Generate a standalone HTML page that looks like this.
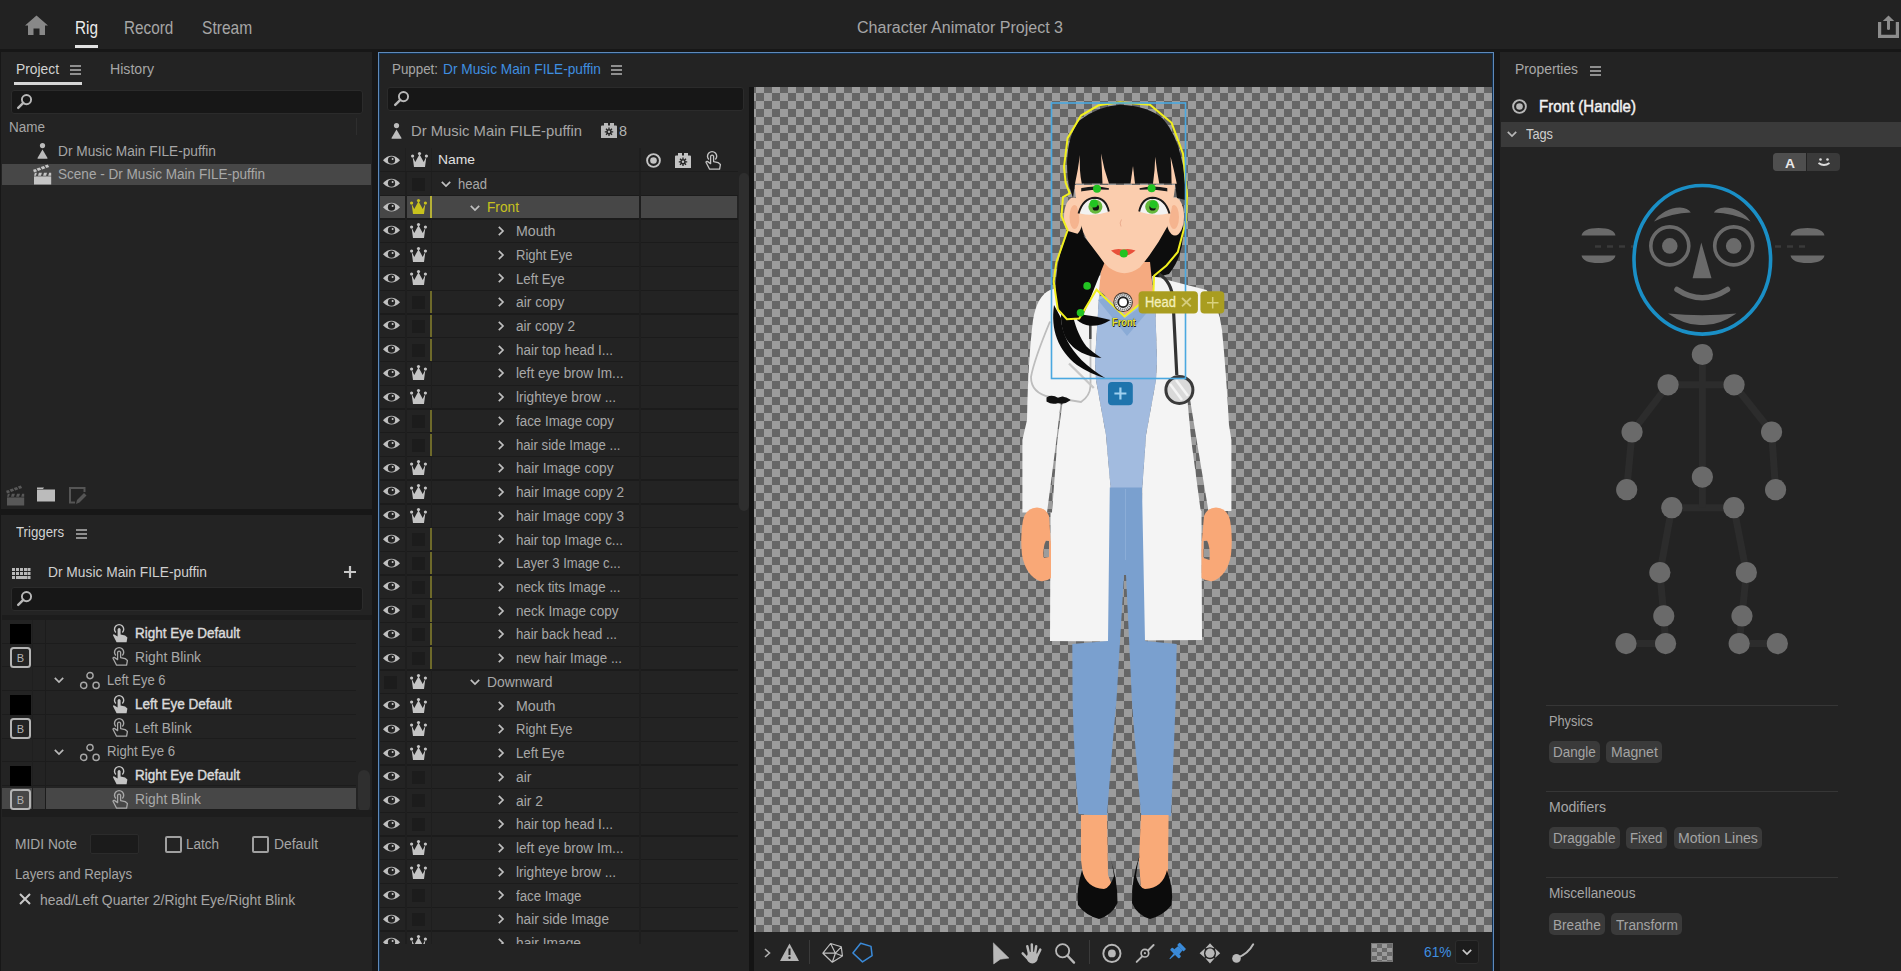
<!DOCTYPE html>
<html><head><meta charset="utf-8"><title>Character Animator</title>
<style>*{box-sizing:border-box;margin:0;padding:0}
html,body{width:1901px;height:971px;overflow:hidden;background:#171717;font-family:"Liberation Sans",sans-serif;color:#a8a8a8;position:relative}
.a{position:absolute}
.t{position:absolute;white-space:nowrap;line-height:1}
svg{position:absolute;overflow:visible}
</style></head><body>
<svg width="0" height="0" style="position:absolute"><defs>
<symbol id="search" overflow="visible"><circle cx="9.5" cy="5.6" r="4.6" fill="none" stroke-width="1.9"/><path d="M6.3 8.8 L1.2 13.9" stroke-width="2.4" stroke-linecap="round" fill="none"/></symbol>
<symbol id="ham" overflow="visible"><path d="M0 1h11M0 5h11M0 9h11" stroke-width="1.4" fill="none"/></symbol>
<symbol id="person" overflow="visible"><circle cx="5.5" cy="2.6" r="2.6" stroke="none"/><path d="M5.5 6.5 L10.5 15 Q10.8 15.8 10 15.8 H1 Q0.2 15.8 0.5 15 Z" stroke="none"/></symbol>
<symbol id="clap" overflow="visible"><rect x="0" y="11.4" width="17.2" height="8.1" stroke="none"/><path d="M0 10.8 L0.9 7.8 H2.9 L2 10.8Z M4 10.8 L4.9 7.8 H7.9 L7 10.8Z M9.1 10.8 L10 7.8 H13 L12.1 10.8Z M14.2 10.8 L15.1 7.8 H17.2 V10.8Z" stroke="none"/><g transform="rotate(-20 0 7.4)"><path d="M0 7.4 V4.7 H2.6 L3.3 7.4Z M4.4 7.4 L3.7 4.7 H7 L7.7 7.4Z M8.8 7.4 L8.1 4.7 H11.4 L12.1 7.4Z M13.2 7.4 L12.5 4.7 H15.6 L16.1 7.4Z" stroke="none"/></g></symbol>
<symbol id="eye" overflow="visible"><path d="M0 5.2 Q8.5 -3.5 17 5.2 Q8.5 13.9 0 5.2 Z" stroke="none"/><circle cx="8.5" cy="5.2" r="3.6" fill="#232323" stroke="none"/><circle cx="9.6" cy="4.1" r="1" fill="#c8c8c8" stroke="none"/></symbol>
<symbol id="crown" overflow="visible"><path d="M1.6 4.6 L4.3 9.9 L8.5 2.2 L12.7 9.9 L15.4 4.6 L14 15 L3 15 Z" stroke="none"/><circle cx="1.6" cy="4" r="1.6" stroke="none"/><circle cx="8.5" cy="1.6" r="1.6" stroke="none"/><circle cx="15.4" cy="4" r="1.6" stroke="none"/></symbol>
<symbol id="chevd" overflow="visible"><path d="M0.8 0.8 L5 5 L9.2 0.8" fill="none" stroke-width="1.7"/></symbol>
<symbol id="chevr" overflow="visible"><path d="M0.8 0.8 L5 5 L0.8 9.2" fill="none" stroke-width="1.7"/></symbol>
<symbol id="handf" overflow="visible"><path d="M3.85 8.45 A4.6 4.6 0 1 1 10.35 8.45" fill="none" stroke-width="1.4"/><path d="M5.6 5.2 Q7.1 3 8.6 5.2 V10.6 L13.1 11.6 L15.4 13.6 L14.6 18.2 H4.6 L1 11.2 Q1.1 10.1 2.3 10.4 L5.6 12.6 Z" stroke="none"/></symbol>
<symbol id="hando" overflow="visible"><path d="M3.85 8.45 A4.6 4.6 0 1 1 10.35 8.45" fill="none" stroke-width="1.4"/><path d="M5.6 5.2 Q7.1 3 8.6 5.2 V10.6 L13.1 11.6 L15.4 13.6 L14.6 18.2 H4.6 L1 11.2 Q1.1 10.1 2.3 10.4 L5.6 12.6 Z" fill="none" stroke-width="1.3" stroke-linejoin="round"/></symbol>
<symbol id="bbox" overflow="visible"><rect x="1" y="1" width="19" height="19" rx="2.5" fill="none" stroke-width="2"/><text x="10.5" y="15" font-family="Liberation Sans" font-size="11" text-anchor="middle" stroke="none">B</text></symbol>
<symbol id="group" overflow="visible"><circle cx="10" cy="3.6" r="3.1" fill="none" stroke-width="1.4"/><circle cx="3.7" cy="13.4" r="3.1" fill="none" stroke-width="1.4"/><circle cx="16.1" cy="13.4" r="3.1" fill="none" stroke-width="1.4"/></symbol>
<symbol id="kbd" overflow="visible"><path d="M0 0h3v3h-3zM4 0h3v3h-3zM8 0h3v3h-3zM12 0h3v3h-3zM15.5 0h3v3h-3zM0 4h3v3h-3zM4 4h3v3h-3zM8 4h3v3h-3zM12 4h3v3h-3zM15.5 4h3v3h-3zM0 8h3v3h-3zM4 8h11v3h-11zM15.5 8h3v3h-3z" stroke="none"/></symbol>
<symbol id="plus" overflow="visible"><path d="M6 0V12M0 6H12" stroke-width="2.2" fill="none"/></symbol>
<symbol id="xx" overflow="visible"><path d="M1 1L11 11M11 1L1 11" stroke-width="2" fill="none"/></symbol>
<symbol id="handle" overflow="visible"><circle cx="7.5" cy="7.5" r="6.4" fill="none" stroke-width="1.9"/><circle cx="7.5" cy="7.5" r="3.3" stroke="none"/></symbol>
<symbol id="gearblk" overflow="visible"><path d="M0 3.5 Q0 2.5 1 2.5 H3 V0 H7 V2.5 H9 V0 H13 V2.5 H15 Q16 2.5 16 3.5 V15 H0 Z" stroke="none"/><circle cx="8" cy="8.8" r="2.6" fill="#232323" stroke="none"/><path d="M8 4.5V13M3.8 8.8H12.2M5 5.8L11 11.8M11 5.8L5 11.8" stroke="#232323" stroke-width="1.3"/><circle cx="8" cy="8.8" r="1.2" stroke="none"/></symbol>
</defs></svg>
<div class="a" style="left:0px;top:0px;width:1901px;height:49px;background:#222222;"></div><svg class="a" style="left:25px;top:15px" width="23" height="20" viewBox="0 0 23 20"><path d="M11.5 0.5 L23 10.5 L20 10.5 L20 20 L14.5 20 L14.5 13.5 L8.5 13.5 L8.5 20 L3 20 L3 10.5 L0 10.5 Z" fill="#888"/></svg><div class="t" style="left:75.4px;top:19.14px;font-size:18.31px;color:#ececec;transform:scaleX(0.837);transform-origin:0 0;">Rig</div><div class="a" style="left:75px;top:45px;width:23px;height:3px;background:#e2e2e2;"></div><div class="t" style="left:124.2px;top:19.14px;font-size:18.31px;color:#a6a6a6;transform:scaleX(0.836);transform-origin:0 0;">Record</div><div class="t" style="left:202.2px;top:19.14px;font-size:18.31px;color:#a6a6a6;transform:scaleX(0.851);transform-origin:0 0;">Stream</div><div class="t" style="left:857px;top:19.04px;font-size:16.42px;color:#a6a6a6;transform:scaleX(0.978);transform-origin:0 0;">Character Animator Project 3</div><svg class="a" style="left:1878px;top:15px" width="21" height="24" viewBox="0 0 21 24"><path d="M1.6 7 V21.4 H19.4 V7" fill="none" stroke="#8c8c8c" stroke-width="3.2"/><path d="M10.5 5 V13.5" stroke="#8c8c8c" stroke-width="3" stroke-linecap="round"/><path d="M4.8 6 L10.5 0.5 L16.2 6 Z" fill="#8c8c8c"/></svg><div class="a" style="left:1px;top:52px;width:371px;height:457px;background:#232323;"></div><div class="t" style="left:16px;top:61.05px;font-size:15.12px;color:#d2d2d2;transform:scaleX(0.914);transform-origin:0 0;">Project</div><svg class="a" style="left:70px;top:64.5px;" width="11" height="11" viewBox="0 0 11 11" fill="#b4b4b4" stroke="#b4b4b4"><use href="#ham"/></svg><div class="a" style="left:14px;top:82px;width:68px;height:3px;background:#d6d6d6;"></div><div class="t" style="left:110px;top:61.05px;font-size:15.12px;color:#a6a6a6;transform:scaleX(0.936);transform-origin:0 0;">History</div><div class="a" style="left:11px;top:90px;width:352px;height:24px;background:#171717;border:1px solid #2b2b2b;border-radius:3px"></div><svg class="a" style="left:17px;top:94px;" width="15" height="15" viewBox="0 0 15 15" fill="#b8b8b8" stroke="#b8b8b8"><use href="#search"/></svg><div class="t" style="left:9px;top:120.96px;font-size:13.81px;color:#a6a6a6;transform:scaleX(0.978);transform-origin:0 0;">Name</div><div class="a" style="left:356px;top:118px;width:1px;height:17px;background:#2e2e2e;"></div><svg class="a" style="left:37px;top:143px;" width="11" height="16" viewBox="0 0 11 16" fill="#bcbcbc" stroke="#bcbcbc"><use href="#person"/></svg><div class="t" style="left:58px;top:144.25px;font-size:14.53px;color:#a6a6a6;transform:scaleX(0.943);transform-origin:0 0;">Dr Music Main FILE-puffin</div><div class="a" style="left:2px;top:164px;width:369px;height:21px;background:#474747;"></div><svg class="a" style="left:34px;top:164.5px;" width="17" height="19" viewBox="0 0 17 19" fill="#c4c4c4" stroke="#c4c4c4"><use href="#clap"/></svg><div class="t" style="left:58px;top:167.15px;font-size:14.53px;color:#a8a8a8;transform:scaleX(0.934);transform-origin:0 0;">Scene - Dr Music Main FILE-puffin</div><svg class="a" style="left:7px;top:485.5px;" width="17" height="19" viewBox="0 0 17 19" fill="#585858" stroke="#585858"><use href="#clap"/></svg><svg class="a" style="left:37px;top:487px" width="18" height="15" viewBox="0 0 18 15"><path d="M0 2 H6 L7 0.5 H0z" fill="#bbb"/><rect x="0" y="2.5" width="18" height="12" fill="#bbb"/></svg><svg class="a" style="left:69px;top:487px" width="18" height="18" viewBox="0 0 18 18"><path d="M15.5 5 V1 H1 V15.5 H6" fill="none" stroke="#555" stroke-width="2"/><path d="M7 17 L8 13 L15 6 L17.5 8.5 L10.5 15.5 Z" fill="#555"/></svg><div class="a" style="left:1px;top:515px;width:371px;height:456px;background:#232323;"></div><div class="t" style="left:16px;top:524.15px;font-size:15.12px;color:#d2d2d2;transform:scaleX(0.875);transform-origin:0 0;">Triggers</div><svg class="a" style="left:76px;top:528.5px;" width="11" height="11" viewBox="0 0 11 11" fill="#b4b4b4" stroke="#b4b4b4"><use href="#ham"/></svg><svg class="a" style="left:12px;top:568px;" width="19" height="11" viewBox="0 0 19 11" fill="#b8b8b8" stroke="#b8b8b8"><use href="#kbd"/></svg><div class="t" style="left:48px;top:565.35px;font-size:14.53px;color:#d0d0d0;transform:scaleX(0.949);transform-origin:0 0;">Dr Music Main FILE-puffin</div><svg class="a" style="left:344px;top:566px;" width="12" height="12" viewBox="0 0 12 12" fill="#c8c8c8" stroke="#c8c8c8"><use href="#plus"/></svg><div class="a" style="left:11px;top:587px;width:352px;height:24px;background:#171717;border:1px solid #2b2b2b;border-radius:3px"></div><svg class="a" style="left:17px;top:591px;" width="15" height="15" viewBox="0 0 15 15" fill="#b8b8b8" stroke="#b8b8b8"><use href="#search"/></svg><div class="a" style="left:2px;top:615px;width:370px;height:5px;background:#1c1c1c;"></div><div class="a" style="left:2px;top:642.72px;width:354px;height:1px;background:#1c1c1c;"></div><div class="a" style="left:10px;top:623.5px;width:21px;height:20px;background:#000;"></div><svg class="a" style="left:111.5px;top:623.5px;" width="16" height="19" viewBox="0 0 16 19" fill="#c4c4c4" stroke="#c4c4c4"><use href="#handf"/></svg><div class="t" style="left:135px;top:626.02px;font-size:14.68px;color:#dadada;transform:scaleX(0.920);transform-origin:0 0;-webkit-text-stroke:0.45px #dadada;">Right Eye Default</div><div class="a" style="left:2px;top:666.44px;width:354px;height:1px;background:#1c1c1c;"></div><svg class="a" style="left:10px;top:646.72px;" width="21" height="21" viewBox="0 0 21 21" fill="#b4b4b4" stroke="#b4b4b4"><use href="#bbox"/></svg><svg class="a" style="left:111.5px;top:647.22px;" width="16" height="19" viewBox="0 0 16 19" fill="#a8a8a8" stroke="#a8a8a8"><use href="#hando"/></svg><div class="t" style="left:135px;top:649.74px;font-size:14.68px;color:#a8a8a8;transform:scaleX(0.941);transform-origin:0 0;">Right Blink</div><div class="a" style="left:2px;top:690.16px;width:354px;height:1px;background:#1c1c1c;"></div><svg class="a" style="left:54px;top:677.44px;" width="10" height="6" viewBox="0 0 10 6" fill="#b8b8b8" stroke="#b8b8b8"><use href="#chevd"/></svg><svg class="a" style="left:80px;top:672.44px;" width="20" height="18" viewBox="0 0 20 18" fill="#a8a8a8" stroke="#a8a8a8"><use href="#group"/></svg><div class="t" style="left:106.5px;top:672.86px;font-size:14.68px;color:#a8a8a8;transform:scaleX(0.885);transform-origin:0 0;">Left Eye 6</div><div class="a" style="left:2px;top:713.88px;width:354px;height:1px;background:#1c1c1c;"></div><div class="a" style="left:10px;top:694.66px;width:21px;height:20px;background:#000;"></div><svg class="a" style="left:111.5px;top:694.66px;" width="16" height="19" viewBox="0 0 16 19" fill="#c4c4c4" stroke="#c4c4c4"><use href="#handf"/></svg><div class="t" style="left:135px;top:697.18px;font-size:14.68px;color:#dadada;transform:scaleX(0.924);transform-origin:0 0;-webkit-text-stroke:0.45px #dadada;">Left Eye Default</div><div class="a" style="left:2px;top:737.6px;width:354px;height:1px;background:#1c1c1c;"></div><svg class="a" style="left:10px;top:717.88px;" width="21" height="21" viewBox="0 0 21 21" fill="#b4b4b4" stroke="#b4b4b4"><use href="#bbox"/></svg><svg class="a" style="left:111.5px;top:718.38px;" width="16" height="19" viewBox="0 0 16 19" fill="#a8a8a8" stroke="#a8a8a8"><use href="#hando"/></svg><div class="t" style="left:135px;top:720.90px;font-size:14.68px;color:#a8a8a8;transform:scaleX(0.938);transform-origin:0 0;">Left Blink</div><div class="a" style="left:2px;top:761.32px;width:354px;height:1px;background:#1c1c1c;"></div><svg class="a" style="left:54px;top:748.6px;" width="10" height="6" viewBox="0 0 10 6" fill="#b8b8b8" stroke="#b8b8b8"><use href="#chevd"/></svg><svg class="a" style="left:80px;top:743.6px;" width="20" height="18" viewBox="0 0 20 18" fill="#a8a8a8" stroke="#a8a8a8"><use href="#group"/></svg><div class="t" style="left:106.5px;top:744.02px;font-size:14.68px;color:#a8a8a8;transform:scaleX(0.896);transform-origin:0 0;">Right Eye 6</div><div class="a" style="left:2px;top:785.04px;width:354px;height:1px;background:#1c1c1c;"></div><div class="a" style="left:10px;top:765.82px;width:21px;height:20px;background:#000;"></div><svg class="a" style="left:111.5px;top:765.82px;" width="16" height="19" viewBox="0 0 16 19" fill="#c4c4c4" stroke="#c4c4c4"><use href="#handf"/></svg><div class="t" style="left:135px;top:768.34px;font-size:14.68px;color:#dadada;transform:scaleX(0.920);transform-origin:0 0;-webkit-text-stroke:0.45px #dadada;">Right Eye Default</div><div class="a" style="left:2px;top:787.54px;width:354px;height:22px;background:#474747;"></div><div class="a" style="left:32px;top:787.54px;width:13px;height:22px;background:#3d3d3d;"></div><div class="a" style="left:2px;top:808.76px;width:354px;height:1px;background:#1c1c1c;"></div><svg class="a" style="left:10px;top:789.04px;" width="21" height="21" viewBox="0 0 21 21" fill="#b4b4b4" stroke="#b4b4b4"><use href="#bbox"/></svg><svg class="a" style="left:111.5px;top:789.54px;" width="16" height="19" viewBox="0 0 16 19" fill="#a8a8a8" stroke="#a8a8a8"><use href="#hando"/></svg><div class="t" style="left:135px;top:792.06px;font-size:14.68px;color:#a8a8a8;transform:scaleX(0.941);transform-origin:0 0;">Right Blink</div><div class="a" style="left:32px;top:620px;width:1px;height:190px;background:#1f1f1f;"></div><div class="a" style="left:45px;top:620px;width:1px;height:190px;background:#1c1c1c;"></div><div class="a" style="left:358px;top:770px;width:12px;height:42px;background:#2f2f2f;border-radius:6px"></div><div class="a" style="left:2px;top:810px;width:370px;height:7px;background:#1d1d1d;"></div><div class="t" style="left:15px;top:837.35px;font-size:14.53px;color:#a6a6a6;transform:scaleX(0.949);transform-origin:0 0;">MIDI Note</div><div class="a" style="left:90px;top:834px;width:49px;height:20px;background:#1b1b1b;border:1px solid #2b2b2b;border-radius:2px"></div><div class="a" style="left:165px;top:836px;width:17px;height:17px;border:2px solid #a0a0a0;border-radius:2px"></div><div class="t" style="left:186px;top:837.35px;font-size:14.53px;color:#a6a6a6;transform:scaleX(0.929);transform-origin:0 0;">Latch</div><div class="a" style="left:252px;top:836px;width:17px;height:17px;border:2px solid #a0a0a0;border-radius:2px"></div><div class="t" style="left:274px;top:837.35px;font-size:14.53px;color:#a6a6a6;transform:scaleX(0.957);transform-origin:0 0;">Default</div><div class="t" style="left:15px;top:866.95px;font-size:14.53px;color:#a6a6a6;transform:scaleX(0.912);transform-origin:0 0;">Layers and Replays</div><svg class="a" style="left:19px;top:893px;" width="12" height="12" viewBox="0 0 12 12" fill="#c8c8c8" stroke="#c8c8c8"><use href="#xx"/></svg><div class="t" style="left:40px;top:892.85px;font-size:14.53px;color:#a6a6a6;transform:scaleX(0.958);transform-origin:0 0;">head/Left Quarter 2/Right Eye/Right Blink</div><div class="a" style="left:378px;top:52px;width:1116px;height:919px;background:#232323;"></div><div class="a" style="left:378px;top:52px;width:1116px;height:1px;background:#5f89b9;"></div><div class="a" style="left:378px;top:53px;width:1116px;height:1px;background:#12304f;"></div><div class="a" style="left:378px;top:52px;width:1px;height:919px;background:#5f89b9;"></div><div class="a" style="left:379px;top:53px;width:1px;height:918px;background:#12304f;"></div><div class="a" style="left:1493px;top:52px;width:1px;height:919px;background:#5f89b9;"></div><div class="a" style="left:1492px;top:53px;width:1px;height:918px;background:#12304f;"></div><div class="t" style="left:392px;top:61.05px;font-size:15.12px;color:#a6a6a6;transform:scaleX(0.883);transform-origin:0 0;">Puppet:</div><div class="t" style="left:443px;top:61.05px;font-size:15.12px;color:#3f8fe0;transform:scaleX(0.906);transform-origin:0 0;">Dr Music Main FILE-puffin</div><svg class="a" style="left:611px;top:64.5px;" width="11" height="11" viewBox="0 0 11 11" fill="#b4b4b4" stroke="#b4b4b4"><use href="#ham"/></svg><div class="a" style="left:387px;top:87px;width:357px;height:24px;background:#171717;border:1px solid #2b2b2b;border-radius:3px"></div><svg class="a" style="left:393.5px;top:91px;" width="15" height="15" viewBox="0 0 15 15" fill="#b8b8b8" stroke="#b8b8b8"><use href="#search"/></svg><svg class="a" style="left:391px;top:123px;" width="11" height="16" viewBox="0 0 11 16" fill="#bcbcbc" stroke="#bcbcbc"><use href="#person"/></svg><div class="t" style="left:411px;top:123.68px;font-size:14.97px;color:#a6a6a6;transform:scaleX(0.990);transform-origin:0 0;">Dr Music Main FILE-puffin</div><svg class="a" style="left:601px;top:123px;" width="16" height="15" viewBox="0 0 16 15" fill="#b8b8b8" stroke="#b8b8b8"><use href="#gearblk"/></svg><div class="t" style="left:619px;top:123.68px;font-size:14.97px;color:#b4b4b4;transform:scaleX(0.961);transform-origin:0 0;">8</div><svg class="a" style="left:383px;top:155px;" width="17" height="11" viewBox="0 0 17 11" fill="#c4c4c4" stroke="#c4c4c4"><use href="#eye"/></svg><svg class="a" style="left:411px;top:152px;" width="17" height="16" viewBox="0 0 17 16" fill="#c4c4c4" stroke="#c4c4c4"><use href="#crown"/></svg><div class="t" style="left:438px;top:153.24px;font-size:13.37px;color:#e0e0e0;transform:scaleX(1.038);transform-origin:0 0;">Name</div><svg class="a" style="left:646px;top:153px;" width="15" height="15" viewBox="0 0 15 15" fill="#c4c4c4" stroke="#c4c4c4"><use href="#handle"/></svg><svg class="a" style="left:675px;top:153px;" width="16" height="15" viewBox="0 0 16 15" fill="#c4c4c4" stroke="#c4c4c4"><use href="#gearblk"/></svg><svg class="a" style="left:705px;top:151px;" width="16" height="19" viewBox="0 0 16 19" fill="#c4c4c4" stroke="#c4c4c4"><use href="#hando"/></svg><div class="a" style="left:380px;top:171px;width:358px;height:1px;background:#1c1c1c;"></div><div class="a" style="left:405px;top:148px;width:1.2px;height:23px;background:#1f1f1f;"></div><div class="a" style="left:430.5px;top:148px;width:1.2px;height:23px;background:#1f1f1f;"></div><div class="a" style="left:639px;top:148px;width:1.5px;height:23px;background:#1e1e1e;"></div><div class="a" style="left:380px;top:171px;width:370px;height:773px;overflow:hidden"><div class="a" style="left:0px;top:23.72px;width:358px;height:1.3px;background:#1b1b1b;"></div><div class="a" style="left:25px;top:0.5px;width:1.5px;height:24px;background:#1e1e1e;"></div><div class="a" style="left:50.5px;top:0.5px;width:1.5px;height:24px;background:#1e1e1e;"></div><div class="a" style="left:259px;top:0.5px;width:1.5px;height:24px;background:#1e1e1e;"></div><svg class="a" style="left:3px;top:7.0px;" width="17" height="11" viewBox="0 0 17 11" fill="#c0c0c0" stroke="#c0c0c0"><use href="#eye"/></svg><div class="a" style="left:32px;top:6.5px;width:13px;height:13px;background:#1c1c1c;"></div><svg class="a" style="left:61px;top:10.0px;" width="10" height="6" viewBox="0 0 10 6" fill="#c0c0c0" stroke="#c0c0c0"><use href="#chevd"/></svg><div class="t" style="left:78px;top:5.62px;font-size:14.68px;color:#a8a8a8;transform:scaleX(0.888);transform-origin:0 0;">head</div><div class="a" style="left:0px;top:25.23px;width:25px;height:22px;background:#474747;"></div><div class="a" style="left:27px;top:25.23px;width:23px;height:22px;background:#474747;"></div><div class="a" style="left:52px;top:25.23px;width:207px;height:22px;background:#474747;"></div><div class="a" style="left:261px;top:25.23px;width:96px;height:22px;background:#474747;"></div><div class="a" style="left:0px;top:47.45px;width:358px;height:1.3px;background:#1b1b1b;"></div><div class="a" style="left:25px;top:24.23px;width:1.5px;height:24px;background:#1e1e1e;"></div><div class="a" style="left:50.5px;top:24.23px;width:1.5px;height:24px;background:#1e1e1e;"></div><div class="a" style="left:259px;top:24.23px;width:1.5px;height:24px;background:#1e1e1e;"></div><svg class="a" style="left:3px;top:30.73px;" width="17" height="11" viewBox="0 0 17 11" fill="#c0c0c0" stroke="#c0c0c0"><use href="#eye"/></svg><svg class="a" style="left:30px;top:28.23px;" width="17" height="16" viewBox="0 0 17 16" fill="#c8c21e" stroke="#c8c21e"><use href="#crown"/></svg><div class="a" style="left:50px;top:25.23px;width:1.6px;height:22px;background:#b5b036;"></div><svg class="a" style="left:90px;top:33.73px;" width="10" height="6" viewBox="0 0 10 6" fill="#c0c0c0" stroke="#c0c0c0"><use href="#chevd"/></svg><div class="t" style="left:107px;top:29.35px;font-size:14.68px;color:#c8c21e;transform:scaleX(0.934);transform-origin:0 0;">Front</div><div class="a" style="left:0px;top:71.18px;width:358px;height:1.3px;background:#1b1b1b;"></div><div class="a" style="left:25px;top:47.96px;width:1.5px;height:24px;background:#1e1e1e;"></div><div class="a" style="left:50.5px;top:47.96px;width:1.5px;height:24px;background:#1e1e1e;"></div><div class="a" style="left:259px;top:47.96px;width:1.5px;height:24px;background:#1e1e1e;"></div><svg class="a" style="left:3px;top:54.46px;" width="17" height="11" viewBox="0 0 17 11" fill="#c0c0c0" stroke="#c0c0c0"><use href="#eye"/></svg><svg class="a" style="left:30px;top:51.96px;" width="17" height="16" viewBox="0 0 17 16" fill="#c4c4c4" stroke="#c4c4c4"><use href="#crown"/></svg><svg class="a" style="left:118px;top:54.96px;" width="6" height="10" viewBox="0 0 6 10" fill="#c0c0c0" stroke="#c0c0c0"><use href="#chevr"/></svg><div class="t" style="left:136px;top:53.08px;font-size:14.68px;color:#a8a8a8;transform:scaleX(0.969);transform-origin:0 0;">Mouth</div><div class="a" style="left:0px;top:94.91px;width:358px;height:1.3px;background:#1b1b1b;"></div><div class="a" style="left:25px;top:71.69px;width:1.5px;height:24px;background:#1e1e1e;"></div><div class="a" style="left:50.5px;top:71.69px;width:1.5px;height:24px;background:#1e1e1e;"></div><div class="a" style="left:259px;top:71.69px;width:1.5px;height:24px;background:#1e1e1e;"></div><svg class="a" style="left:3px;top:78.19px;" width="17" height="11" viewBox="0 0 17 11" fill="#c0c0c0" stroke="#c0c0c0"><use href="#eye"/></svg><svg class="a" style="left:30px;top:75.69px;" width="17" height="16" viewBox="0 0 17 16" fill="#c4c4c4" stroke="#c4c4c4"><use href="#crown"/></svg><svg class="a" style="left:118px;top:78.69px;" width="6" height="10" viewBox="0 0 6 10" fill="#c0c0c0" stroke="#c0c0c0"><use href="#chevr"/></svg><div class="t" style="left:136px;top:76.81px;font-size:14.68px;color:#a8a8a8;transform:scaleX(0.888);transform-origin:0 0;">Right Eye</div><div class="a" style="left:0px;top:118.64px;width:358px;height:1.3px;background:#1b1b1b;"></div><div class="a" style="left:25px;top:95.42px;width:1.5px;height:24px;background:#1e1e1e;"></div><div class="a" style="left:50.5px;top:95.42px;width:1.5px;height:24px;background:#1e1e1e;"></div><div class="a" style="left:259px;top:95.42px;width:1.5px;height:24px;background:#1e1e1e;"></div><svg class="a" style="left:3px;top:101.92px;" width="17" height="11" viewBox="0 0 17 11" fill="#c0c0c0" stroke="#c0c0c0"><use href="#eye"/></svg><svg class="a" style="left:30px;top:99.42px;" width="17" height="16" viewBox="0 0 17 16" fill="#c4c4c4" stroke="#c4c4c4"><use href="#crown"/></svg><svg class="a" style="left:118px;top:102.42px;" width="6" height="10" viewBox="0 0 6 10" fill="#c0c0c0" stroke="#c0c0c0"><use href="#chevr"/></svg><div class="t" style="left:136px;top:100.54px;font-size:14.68px;color:#a8a8a8;transform:scaleX(0.901);transform-origin:0 0;">Left Eye</div><div class="a" style="left:0px;top:142.37px;width:358px;height:1.3px;background:#1b1b1b;"></div><div class="a" style="left:25px;top:119.15px;width:1.5px;height:24px;background:#1e1e1e;"></div><div class="a" style="left:50.5px;top:119.15px;width:1.5px;height:24px;background:#1e1e1e;"></div><div class="a" style="left:259px;top:119.15px;width:1.5px;height:24px;background:#1e1e1e;"></div><svg class="a" style="left:3px;top:125.65px;" width="17" height="11" viewBox="0 0 17 11" fill="#c0c0c0" stroke="#c0c0c0"><use href="#eye"/></svg><div class="a" style="left:32px;top:125.15px;width:13px;height:13px;background:#1c1c1c;"></div><div class="a" style="left:50px;top:120.15px;width:1.5px;height:22px;background:#6e6a2a;"></div><svg class="a" style="left:118px;top:126.15px;" width="6" height="10" viewBox="0 0 6 10" fill="#c0c0c0" stroke="#c0c0c0"><use href="#chevr"/></svg><div class="t" style="left:136px;top:124.27px;font-size:14.68px;color:#a8a8a8;transform:scaleX(0.944);transform-origin:0 0;">air copy</div><div class="a" style="left:0px;top:166.1px;width:358px;height:1.3px;background:#1b1b1b;"></div><div class="a" style="left:25px;top:142.88px;width:1.5px;height:24px;background:#1e1e1e;"></div><div class="a" style="left:50.5px;top:142.88px;width:1.5px;height:24px;background:#1e1e1e;"></div><div class="a" style="left:259px;top:142.88px;width:1.5px;height:24px;background:#1e1e1e;"></div><svg class="a" style="left:3px;top:149.38px;" width="17" height="11" viewBox="0 0 17 11" fill="#c0c0c0" stroke="#c0c0c0"><use href="#eye"/></svg><div class="a" style="left:32px;top:148.88px;width:13px;height:13px;background:#1c1c1c;"></div><div class="a" style="left:50px;top:143.88px;width:1.5px;height:22px;background:#6e6a2a;"></div><svg class="a" style="left:118px;top:149.88px;" width="6" height="10" viewBox="0 0 6 10" fill="#c0c0c0" stroke="#c0c0c0"><use href="#chevr"/></svg><div class="t" style="left:136px;top:148.00px;font-size:14.68px;color:#a8a8a8;transform:scaleX(0.928);transform-origin:0 0;">air copy 2</div><div class="a" style="left:0px;top:189.83px;width:358px;height:1.3px;background:#1b1b1b;"></div><div class="a" style="left:25px;top:166.61px;width:1.5px;height:24px;background:#1e1e1e;"></div><div class="a" style="left:50.5px;top:166.61px;width:1.5px;height:24px;background:#1e1e1e;"></div><div class="a" style="left:259px;top:166.61px;width:1.5px;height:24px;background:#1e1e1e;"></div><svg class="a" style="left:3px;top:173.11px;" width="17" height="11" viewBox="0 0 17 11" fill="#c0c0c0" stroke="#c0c0c0"><use href="#eye"/></svg><div class="a" style="left:32px;top:172.61px;width:13px;height:13px;background:#1c1c1c;"></div><div class="a" style="left:50px;top:167.61px;width:1.5px;height:22px;background:#6e6a2a;"></div><svg class="a" style="left:118px;top:173.61px;" width="6" height="10" viewBox="0 0 6 10" fill="#c0c0c0" stroke="#c0c0c0"><use href="#chevr"/></svg><div class="t" style="left:136px;top:171.73px;font-size:14.68px;color:#a8a8a8;transform:scaleX(0.915);transform-origin:0 0;">hair top head I...</div><div class="a" style="left:0px;top:213.56px;width:358px;height:1.3px;background:#1b1b1b;"></div><div class="a" style="left:25px;top:190.34px;width:1.5px;height:24px;background:#1e1e1e;"></div><div class="a" style="left:50.5px;top:190.34px;width:1.5px;height:24px;background:#1e1e1e;"></div><div class="a" style="left:259px;top:190.34px;width:1.5px;height:24px;background:#1e1e1e;"></div><svg class="a" style="left:3px;top:196.84px;" width="17" height="11" viewBox="0 0 17 11" fill="#c0c0c0" stroke="#c0c0c0"><use href="#eye"/></svg><svg class="a" style="left:30px;top:194.34px;" width="17" height="16" viewBox="0 0 17 16" fill="#c4c4c4" stroke="#c4c4c4"><use href="#crown"/></svg><svg class="a" style="left:118px;top:197.34px;" width="6" height="10" viewBox="0 0 6 10" fill="#c0c0c0" stroke="#c0c0c0"><use href="#chevr"/></svg><div class="t" style="left:136px;top:195.46px;font-size:14.68px;color:#a8a8a8;transform:scaleX(0.928);transform-origin:0 0;">left eye brow Im...</div><div class="a" style="left:0px;top:237.29px;width:358px;height:1.3px;background:#1b1b1b;"></div><div class="a" style="left:25px;top:214.07px;width:1.5px;height:24px;background:#1e1e1e;"></div><div class="a" style="left:50.5px;top:214.07px;width:1.5px;height:24px;background:#1e1e1e;"></div><div class="a" style="left:259px;top:214.07px;width:1.5px;height:24px;background:#1e1e1e;"></div><svg class="a" style="left:3px;top:220.57px;" width="17" height="11" viewBox="0 0 17 11" fill="#c0c0c0" stroke="#c0c0c0"><use href="#eye"/></svg><svg class="a" style="left:30px;top:218.07px;" width="17" height="16" viewBox="0 0 17 16" fill="#c4c4c4" stroke="#c4c4c4"><use href="#crown"/></svg><svg class="a" style="left:118px;top:221.07px;" width="6" height="10" viewBox="0 0 6 10" fill="#c0c0c0" stroke="#c0c0c0"><use href="#chevr"/></svg><div class="t" style="left:136px;top:219.19px;font-size:14.68px;color:#a8a8a8;transform:scaleX(0.929);transform-origin:0 0;">lrighteye brow ...</div><div class="a" style="left:0px;top:261.02px;width:358px;height:1.3px;background:#1b1b1b;"></div><div class="a" style="left:25px;top:237.8px;width:1.5px;height:24px;background:#1e1e1e;"></div><div class="a" style="left:50.5px;top:237.8px;width:1.5px;height:24px;background:#1e1e1e;"></div><div class="a" style="left:259px;top:237.8px;width:1.5px;height:24px;background:#1e1e1e;"></div><svg class="a" style="left:3px;top:244.3px;" width="17" height="11" viewBox="0 0 17 11" fill="#c0c0c0" stroke="#c0c0c0"><use href="#eye"/></svg><div class="a" style="left:32px;top:243.8px;width:13px;height:13px;background:#1c1c1c;"></div><div class="a" style="left:50px;top:238.8px;width:1.5px;height:22px;background:#6e6a2a;"></div><svg class="a" style="left:118px;top:244.8px;" width="6" height="10" viewBox="0 0 6 10" fill="#c0c0c0" stroke="#c0c0c0"><use href="#chevr"/></svg><div class="t" style="left:136px;top:242.92px;font-size:14.68px;color:#a8a8a8;transform:scaleX(0.910);transform-origin:0 0;">face Image copy</div><div class="a" style="left:0px;top:284.75px;width:358px;height:1.3px;background:#1b1b1b;"></div><div class="a" style="left:25px;top:261.53px;width:1.5px;height:24px;background:#1e1e1e;"></div><div class="a" style="left:50.5px;top:261.53px;width:1.5px;height:24px;background:#1e1e1e;"></div><div class="a" style="left:259px;top:261.53px;width:1.5px;height:24px;background:#1e1e1e;"></div><svg class="a" style="left:3px;top:268.03px;" width="17" height="11" viewBox="0 0 17 11" fill="#c0c0c0" stroke="#c0c0c0"><use href="#eye"/></svg><div class="a" style="left:32px;top:267.53px;width:13px;height:13px;background:#1c1c1c;"></div><div class="a" style="left:50px;top:262.53px;width:1.5px;height:22px;background:#6e6a2a;"></div><svg class="a" style="left:118px;top:268.53px;" width="6" height="10" viewBox="0 0 6 10" fill="#c0c0c0" stroke="#c0c0c0"><use href="#chevr"/></svg><div class="t" style="left:136px;top:266.65px;font-size:14.68px;color:#a8a8a8;transform:scaleX(0.896);transform-origin:0 0;">hair side Image ...</div><div class="a" style="left:0px;top:308.48px;width:358px;height:1.3px;background:#1b1b1b;"></div><div class="a" style="left:25px;top:285.26px;width:1.5px;height:24px;background:#1e1e1e;"></div><div class="a" style="left:50.5px;top:285.26px;width:1.5px;height:24px;background:#1e1e1e;"></div><div class="a" style="left:259px;top:285.26px;width:1.5px;height:24px;background:#1e1e1e;"></div><svg class="a" style="left:3px;top:291.76px;" width="17" height="11" viewBox="0 0 17 11" fill="#c0c0c0" stroke="#c0c0c0"><use href="#eye"/></svg><svg class="a" style="left:30px;top:289.26px;" width="17" height="16" viewBox="0 0 17 16" fill="#c4c4c4" stroke="#c4c4c4"><use href="#crown"/></svg><svg class="a" style="left:118px;top:292.26px;" width="6" height="10" viewBox="0 0 6 10" fill="#c0c0c0" stroke="#c0c0c0"><use href="#chevr"/></svg><div class="t" style="left:136px;top:290.38px;font-size:14.68px;color:#a8a8a8;transform:scaleX(0.934);transform-origin:0 0;">hair Image copy</div><div class="a" style="left:0px;top:332.21px;width:358px;height:1.3px;background:#1b1b1b;"></div><div class="a" style="left:25px;top:308.99px;width:1.5px;height:24px;background:#1e1e1e;"></div><div class="a" style="left:50.5px;top:308.99px;width:1.5px;height:24px;background:#1e1e1e;"></div><div class="a" style="left:259px;top:308.99px;width:1.5px;height:24px;background:#1e1e1e;"></div><svg class="a" style="left:3px;top:315.49px;" width="17" height="11" viewBox="0 0 17 11" fill="#c0c0c0" stroke="#c0c0c0"><use href="#eye"/></svg><svg class="a" style="left:30px;top:312.99px;" width="17" height="16" viewBox="0 0 17 16" fill="#c4c4c4" stroke="#c4c4c4"><use href="#crown"/></svg><svg class="a" style="left:118px;top:315.99px;" width="6" height="10" viewBox="0 0 6 10" fill="#c0c0c0" stroke="#c0c0c0"><use href="#chevr"/></svg><div class="t" style="left:136px;top:314.11px;font-size:14.68px;color:#a8a8a8;transform:scaleX(0.926);transform-origin:0 0;">hair Image copy 2</div><div class="a" style="left:0px;top:355.94px;width:358px;height:1.3px;background:#1b1b1b;"></div><div class="a" style="left:25px;top:332.72px;width:1.5px;height:24px;background:#1e1e1e;"></div><div class="a" style="left:50.5px;top:332.72px;width:1.5px;height:24px;background:#1e1e1e;"></div><div class="a" style="left:259px;top:332.72px;width:1.5px;height:24px;background:#1e1e1e;"></div><svg class="a" style="left:3px;top:339.22px;" width="17" height="11" viewBox="0 0 17 11" fill="#c0c0c0" stroke="#c0c0c0"><use href="#eye"/></svg><svg class="a" style="left:30px;top:336.72px;" width="17" height="16" viewBox="0 0 17 16" fill="#c4c4c4" stroke="#c4c4c4"><use href="#crown"/></svg><svg class="a" style="left:118px;top:339.72px;" width="6" height="10" viewBox="0 0 6 10" fill="#c0c0c0" stroke="#c0c0c0"><use href="#chevr"/></svg><div class="t" style="left:136px;top:337.84px;font-size:14.68px;color:#a8a8a8;transform:scaleX(0.926);transform-origin:0 0;">hair Image copy 3</div><div class="a" style="left:0px;top:379.67px;width:358px;height:1.3px;background:#1b1b1b;"></div><div class="a" style="left:25px;top:356.45px;width:1.5px;height:24px;background:#1e1e1e;"></div><div class="a" style="left:50.5px;top:356.45px;width:1.5px;height:24px;background:#1e1e1e;"></div><div class="a" style="left:259px;top:356.45px;width:1.5px;height:24px;background:#1e1e1e;"></div><svg class="a" style="left:3px;top:362.95px;" width="17" height="11" viewBox="0 0 17 11" fill="#c0c0c0" stroke="#c0c0c0"><use href="#eye"/></svg><div class="a" style="left:32px;top:362.45px;width:13px;height:13px;background:#1c1c1c;"></div><div class="a" style="left:50px;top:357.45px;width:1.5px;height:22px;background:#6e6a2a;"></div><svg class="a" style="left:118px;top:363.45px;" width="6" height="10" viewBox="0 0 6 10" fill="#c0c0c0" stroke="#c0c0c0"><use href="#chevr"/></svg><div class="t" style="left:136px;top:361.57px;font-size:14.68px;color:#a8a8a8;transform:scaleX(0.911);transform-origin:0 0;">hair top Image c...</div><div class="a" style="left:0px;top:403.4px;width:358px;height:1.3px;background:#1b1b1b;"></div><div class="a" style="left:25px;top:380.18px;width:1.5px;height:24px;background:#1e1e1e;"></div><div class="a" style="left:50.5px;top:380.18px;width:1.5px;height:24px;background:#1e1e1e;"></div><div class="a" style="left:259px;top:380.18px;width:1.5px;height:24px;background:#1e1e1e;"></div><svg class="a" style="left:3px;top:386.68px;" width="17" height="11" viewBox="0 0 17 11" fill="#c0c0c0" stroke="#c0c0c0"><use href="#eye"/></svg><div class="a" style="left:32px;top:386.18px;width:13px;height:13px;background:#1c1c1c;"></div><div class="a" style="left:50px;top:381.18px;width:1.5px;height:22px;background:#6e6a2a;"></div><svg class="a" style="left:118px;top:387.18px;" width="6" height="10" viewBox="0 0 6 10" fill="#c0c0c0" stroke="#c0c0c0"><use href="#chevr"/></svg><div class="t" style="left:136px;top:385.30px;font-size:14.68px;color:#a8a8a8;transform:scaleX(0.890);transform-origin:0 0;">Layer 3 Image c...</div><div class="a" style="left:0px;top:427.13px;width:358px;height:1.3px;background:#1b1b1b;"></div><div class="a" style="left:25px;top:403.91px;width:1.5px;height:24px;background:#1e1e1e;"></div><div class="a" style="left:50.5px;top:403.91px;width:1.5px;height:24px;background:#1e1e1e;"></div><div class="a" style="left:259px;top:403.91px;width:1.5px;height:24px;background:#1e1e1e;"></div><svg class="a" style="left:3px;top:410.41px;" width="17" height="11" viewBox="0 0 17 11" fill="#c0c0c0" stroke="#c0c0c0"><use href="#eye"/></svg><div class="a" style="left:32px;top:409.91px;width:13px;height:13px;background:#1c1c1c;"></div><div class="a" style="left:50px;top:404.91px;width:1.5px;height:22px;background:#6e6a2a;"></div><svg class="a" style="left:118px;top:410.91px;" width="6" height="10" viewBox="0 0 6 10" fill="#c0c0c0" stroke="#c0c0c0"><use href="#chevr"/></svg><div class="t" style="left:136px;top:409.03px;font-size:14.68px;color:#a8a8a8;transform:scaleX(0.909);transform-origin:0 0;">neck tits Image ...</div><div class="a" style="left:0px;top:450.86px;width:358px;height:1.3px;background:#1b1b1b;"></div><div class="a" style="left:25px;top:427.64px;width:1.5px;height:24px;background:#1e1e1e;"></div><div class="a" style="left:50.5px;top:427.64px;width:1.5px;height:24px;background:#1e1e1e;"></div><div class="a" style="left:259px;top:427.64px;width:1.5px;height:24px;background:#1e1e1e;"></div><svg class="a" style="left:3px;top:434.14px;" width="17" height="11" viewBox="0 0 17 11" fill="#c0c0c0" stroke="#c0c0c0"><use href="#eye"/></svg><div class="a" style="left:32px;top:433.64px;width:13px;height:13px;background:#1c1c1c;"></div><div class="a" style="left:50px;top:428.64px;width:1.5px;height:22px;background:#6e6a2a;"></div><svg class="a" style="left:118px;top:434.64px;" width="6" height="10" viewBox="0 0 6 10" fill="#c0c0c0" stroke="#c0c0c0"><use href="#chevr"/></svg><div class="t" style="left:136px;top:432.76px;font-size:14.68px;color:#a8a8a8;transform:scaleX(0.924);transform-origin:0 0;">neck Image copy</div><div class="a" style="left:0px;top:474.59px;width:358px;height:1.3px;background:#1b1b1b;"></div><div class="a" style="left:25px;top:451.37px;width:1.5px;height:24px;background:#1e1e1e;"></div><div class="a" style="left:50.5px;top:451.37px;width:1.5px;height:24px;background:#1e1e1e;"></div><div class="a" style="left:259px;top:451.37px;width:1.5px;height:24px;background:#1e1e1e;"></div><svg class="a" style="left:3px;top:457.87px;" width="17" height="11" viewBox="0 0 17 11" fill="#c0c0c0" stroke="#c0c0c0"><use href="#eye"/></svg><div class="a" style="left:32px;top:457.37px;width:13px;height:13px;background:#1c1c1c;"></div><div class="a" style="left:50px;top:452.37px;width:1.5px;height:22px;background:#6e6a2a;"></div><svg class="a" style="left:118px;top:458.37px;" width="6" height="10" viewBox="0 0 6 10" fill="#c0c0c0" stroke="#c0c0c0"><use href="#chevr"/></svg><div class="t" style="left:136px;top:456.49px;font-size:14.68px;color:#a8a8a8;transform:scaleX(0.897);transform-origin:0 0;">hair back head ...</div><div class="a" style="left:0px;top:498.32px;width:358px;height:1.3px;background:#1b1b1b;"></div><div class="a" style="left:25px;top:475.1px;width:1.5px;height:24px;background:#1e1e1e;"></div><div class="a" style="left:50.5px;top:475.1px;width:1.5px;height:24px;background:#1e1e1e;"></div><div class="a" style="left:259px;top:475.1px;width:1.5px;height:24px;background:#1e1e1e;"></div><svg class="a" style="left:3px;top:481.6px;" width="17" height="11" viewBox="0 0 17 11" fill="#c0c0c0" stroke="#c0c0c0"><use href="#eye"/></svg><div class="a" style="left:32px;top:481.1px;width:13px;height:13px;background:#1c1c1c;"></div><div class="a" style="left:50px;top:476.1px;width:1.5px;height:22px;background:#6e6a2a;"></div><svg class="a" style="left:118px;top:482.1px;" width="6" height="10" viewBox="0 0 6 10" fill="#c0c0c0" stroke="#c0c0c0"><use href="#chevr"/></svg><div class="t" style="left:136px;top:480.22px;font-size:14.68px;color:#a8a8a8;transform:scaleX(0.909);transform-origin:0 0;">new hair Image ...</div><div class="a" style="left:0px;top:522.05px;width:358px;height:1.3px;background:#1b1b1b;"></div><div class="a" style="left:25px;top:498.83px;width:1.5px;height:24px;background:#1e1e1e;"></div><div class="a" style="left:50.5px;top:498.83px;width:1.5px;height:24px;background:#1e1e1e;"></div><div class="a" style="left:259px;top:498.83px;width:1.5px;height:24px;background:#1e1e1e;"></div><div class="a" style="left:4px;top:504.83px;width:13px;height:13px;background:#1c1c1c;"></div><svg class="a" style="left:30px;top:502.83px;" width="17" height="16" viewBox="0 0 17 16" fill="#c4c4c4" stroke="#c4c4c4"><use href="#crown"/></svg><svg class="a" style="left:90px;top:508.33px;" width="10" height="6" viewBox="0 0 10 6" fill="#c0c0c0" stroke="#c0c0c0"><use href="#chevd"/></svg><div class="t" style="left:107px;top:503.95px;font-size:14.68px;color:#a8a8a8;transform:scaleX(0.945);transform-origin:0 0;">Downward</div><div class="a" style="left:0px;top:545.78px;width:358px;height:1.3px;background:#1b1b1b;"></div><div class="a" style="left:25px;top:522.56px;width:1.5px;height:24px;background:#1e1e1e;"></div><div class="a" style="left:50.5px;top:522.56px;width:1.5px;height:24px;background:#1e1e1e;"></div><div class="a" style="left:259px;top:522.56px;width:1.5px;height:24px;background:#1e1e1e;"></div><svg class="a" style="left:3px;top:529.06px;" width="17" height="11" viewBox="0 0 17 11" fill="#c0c0c0" stroke="#c0c0c0"><use href="#eye"/></svg><svg class="a" style="left:30px;top:526.56px;" width="17" height="16" viewBox="0 0 17 16" fill="#c4c4c4" stroke="#c4c4c4"><use href="#crown"/></svg><svg class="a" style="left:118px;top:529.56px;" width="6" height="10" viewBox="0 0 6 10" fill="#c0c0c0" stroke="#c0c0c0"><use href="#chevr"/></svg><div class="t" style="left:136px;top:527.68px;font-size:14.68px;color:#a8a8a8;transform:scaleX(0.969);transform-origin:0 0;">Mouth</div><div class="a" style="left:0px;top:569.51px;width:358px;height:1.3px;background:#1b1b1b;"></div><div class="a" style="left:25px;top:546.29px;width:1.5px;height:24px;background:#1e1e1e;"></div><div class="a" style="left:50.5px;top:546.29px;width:1.5px;height:24px;background:#1e1e1e;"></div><div class="a" style="left:259px;top:546.29px;width:1.5px;height:24px;background:#1e1e1e;"></div><svg class="a" style="left:3px;top:552.79px;" width="17" height="11" viewBox="0 0 17 11" fill="#c0c0c0" stroke="#c0c0c0"><use href="#eye"/></svg><svg class="a" style="left:30px;top:550.29px;" width="17" height="16" viewBox="0 0 17 16" fill="#c4c4c4" stroke="#c4c4c4"><use href="#crown"/></svg><svg class="a" style="left:118px;top:553.29px;" width="6" height="10" viewBox="0 0 6 10" fill="#c0c0c0" stroke="#c0c0c0"><use href="#chevr"/></svg><div class="t" style="left:136px;top:551.41px;font-size:14.68px;color:#a8a8a8;transform:scaleX(0.888);transform-origin:0 0;">Right Eye</div><div class="a" style="left:0px;top:593.24px;width:358px;height:1.3px;background:#1b1b1b;"></div><div class="a" style="left:25px;top:570.02px;width:1.5px;height:24px;background:#1e1e1e;"></div><div class="a" style="left:50.5px;top:570.02px;width:1.5px;height:24px;background:#1e1e1e;"></div><div class="a" style="left:259px;top:570.02px;width:1.5px;height:24px;background:#1e1e1e;"></div><svg class="a" style="left:3px;top:576.52px;" width="17" height="11" viewBox="0 0 17 11" fill="#c0c0c0" stroke="#c0c0c0"><use href="#eye"/></svg><svg class="a" style="left:30px;top:574.02px;" width="17" height="16" viewBox="0 0 17 16" fill="#c4c4c4" stroke="#c4c4c4"><use href="#crown"/></svg><svg class="a" style="left:118px;top:577.02px;" width="6" height="10" viewBox="0 0 6 10" fill="#c0c0c0" stroke="#c0c0c0"><use href="#chevr"/></svg><div class="t" style="left:136px;top:575.14px;font-size:14.68px;color:#a8a8a8;transform:scaleX(0.901);transform-origin:0 0;">Left Eye</div><div class="a" style="left:0px;top:616.97px;width:358px;height:1.3px;background:#1b1b1b;"></div><div class="a" style="left:25px;top:593.75px;width:1.5px;height:24px;background:#1e1e1e;"></div><div class="a" style="left:50.5px;top:593.75px;width:1.5px;height:24px;background:#1e1e1e;"></div><div class="a" style="left:259px;top:593.75px;width:1.5px;height:24px;background:#1e1e1e;"></div><svg class="a" style="left:3px;top:600.25px;" width="17" height="11" viewBox="0 0 17 11" fill="#c0c0c0" stroke="#c0c0c0"><use href="#eye"/></svg><div class="a" style="left:32px;top:599.75px;width:13px;height:13px;background:#1c1c1c;"></div><svg class="a" style="left:118px;top:600.75px;" width="6" height="10" viewBox="0 0 6 10" fill="#c0c0c0" stroke="#c0c0c0"><use href="#chevr"/></svg><div class="t" style="left:136px;top:598.87px;font-size:14.68px;color:#a8a8a8;transform:scaleX(0.950);transform-origin:0 0;">air</div><div class="a" style="left:0px;top:640.7px;width:358px;height:1.3px;background:#1b1b1b;"></div><div class="a" style="left:25px;top:617.48px;width:1.5px;height:24px;background:#1e1e1e;"></div><div class="a" style="left:50.5px;top:617.48px;width:1.5px;height:24px;background:#1e1e1e;"></div><div class="a" style="left:259px;top:617.48px;width:1.5px;height:24px;background:#1e1e1e;"></div><svg class="a" style="left:3px;top:623.98px;" width="17" height="11" viewBox="0 0 17 11" fill="#c0c0c0" stroke="#c0c0c0"><use href="#eye"/></svg><div class="a" style="left:32px;top:623.48px;width:13px;height:13px;background:#1c1c1c;"></div><svg class="a" style="left:118px;top:624.48px;" width="6" height="10" viewBox="0 0 6 10" fill="#c0c0c0" stroke="#c0c0c0"><use href="#chevr"/></svg><div class="t" style="left:136px;top:622.60px;font-size:14.68px;color:#a8a8a8;transform:scaleX(0.946);transform-origin:0 0;">air 2</div><div class="a" style="left:0px;top:664.43px;width:358px;height:1.3px;background:#1b1b1b;"></div><div class="a" style="left:25px;top:641.21px;width:1.5px;height:24px;background:#1e1e1e;"></div><div class="a" style="left:50.5px;top:641.21px;width:1.5px;height:24px;background:#1e1e1e;"></div><div class="a" style="left:259px;top:641.21px;width:1.5px;height:24px;background:#1e1e1e;"></div><svg class="a" style="left:3px;top:647.71px;" width="17" height="11" viewBox="0 0 17 11" fill="#c0c0c0" stroke="#c0c0c0"><use href="#eye"/></svg><div class="a" style="left:32px;top:647.21px;width:13px;height:13px;background:#1c1c1c;"></div><svg class="a" style="left:118px;top:648.21px;" width="6" height="10" viewBox="0 0 6 10" fill="#c0c0c0" stroke="#c0c0c0"><use href="#chevr"/></svg><div class="t" style="left:136px;top:646.33px;font-size:14.68px;color:#a8a8a8;transform:scaleX(0.915);transform-origin:0 0;">hair top head I...</div><div class="a" style="left:0px;top:688.16px;width:358px;height:1.3px;background:#1b1b1b;"></div><div class="a" style="left:25px;top:664.94px;width:1.5px;height:24px;background:#1e1e1e;"></div><div class="a" style="left:50.5px;top:664.94px;width:1.5px;height:24px;background:#1e1e1e;"></div><div class="a" style="left:259px;top:664.94px;width:1.5px;height:24px;background:#1e1e1e;"></div><svg class="a" style="left:3px;top:671.44px;" width="17" height="11" viewBox="0 0 17 11" fill="#c0c0c0" stroke="#c0c0c0"><use href="#eye"/></svg><svg class="a" style="left:30px;top:668.94px;" width="17" height="16" viewBox="0 0 17 16" fill="#c4c4c4" stroke="#c4c4c4"><use href="#crown"/></svg><svg class="a" style="left:118px;top:671.94px;" width="6" height="10" viewBox="0 0 6 10" fill="#c0c0c0" stroke="#c0c0c0"><use href="#chevr"/></svg><div class="t" style="left:136px;top:670.06px;font-size:14.68px;color:#a8a8a8;transform:scaleX(0.928);transform-origin:0 0;">left eye brow Im...</div><div class="a" style="left:0px;top:711.89px;width:358px;height:1.3px;background:#1b1b1b;"></div><div class="a" style="left:25px;top:688.67px;width:1.5px;height:24px;background:#1e1e1e;"></div><div class="a" style="left:50.5px;top:688.67px;width:1.5px;height:24px;background:#1e1e1e;"></div><div class="a" style="left:259px;top:688.67px;width:1.5px;height:24px;background:#1e1e1e;"></div><svg class="a" style="left:3px;top:695.17px;" width="17" height="11" viewBox="0 0 17 11" fill="#c0c0c0" stroke="#c0c0c0"><use href="#eye"/></svg><svg class="a" style="left:30px;top:692.67px;" width="17" height="16" viewBox="0 0 17 16" fill="#c4c4c4" stroke="#c4c4c4"><use href="#crown"/></svg><svg class="a" style="left:118px;top:695.67px;" width="6" height="10" viewBox="0 0 6 10" fill="#c0c0c0" stroke="#c0c0c0"><use href="#chevr"/></svg><div class="t" style="left:136px;top:693.79px;font-size:14.68px;color:#a8a8a8;transform:scaleX(0.929);transform-origin:0 0;">lrighteye brow ...</div><div class="a" style="left:0px;top:735.62px;width:358px;height:1.3px;background:#1b1b1b;"></div><div class="a" style="left:25px;top:712.4px;width:1.5px;height:24px;background:#1e1e1e;"></div><div class="a" style="left:50.5px;top:712.4px;width:1.5px;height:24px;background:#1e1e1e;"></div><div class="a" style="left:259px;top:712.4px;width:1.5px;height:24px;background:#1e1e1e;"></div><svg class="a" style="left:3px;top:718.9px;" width="17" height="11" viewBox="0 0 17 11" fill="#c0c0c0" stroke="#c0c0c0"><use href="#eye"/></svg><div class="a" style="left:32px;top:718.4px;width:13px;height:13px;background:#1c1c1c;"></div><svg class="a" style="left:118px;top:719.4px;" width="6" height="10" viewBox="0 0 6 10" fill="#c0c0c0" stroke="#c0c0c0"><use href="#chevr"/></svg><div class="t" style="left:136px;top:717.52px;font-size:14.68px;color:#a8a8a8;transform:scaleX(0.902);transform-origin:0 0;">face Image</div><div class="a" style="left:0px;top:759.35px;width:358px;height:1.3px;background:#1b1b1b;"></div><div class="a" style="left:25px;top:736.13px;width:1.5px;height:24px;background:#1e1e1e;"></div><div class="a" style="left:50.5px;top:736.13px;width:1.5px;height:24px;background:#1e1e1e;"></div><div class="a" style="left:259px;top:736.13px;width:1.5px;height:24px;background:#1e1e1e;"></div><svg class="a" style="left:3px;top:742.63px;" width="17" height="11" viewBox="0 0 17 11" fill="#c0c0c0" stroke="#c0c0c0"><use href="#eye"/></svg><div class="a" style="left:32px;top:742.13px;width:13px;height:13px;background:#1c1c1c;"></div><svg class="a" style="left:118px;top:743.13px;" width="6" height="10" viewBox="0 0 6 10" fill="#c0c0c0" stroke="#c0c0c0"><use href="#chevr"/></svg><div class="t" style="left:136px;top:741.25px;font-size:14.68px;color:#a8a8a8;transform:scaleX(0.927);transform-origin:0 0;">hair side Image</div><div class="a" style="left:0px;top:783.08px;width:358px;height:1.3px;background:#1b1b1b;"></div><div class="a" style="left:25px;top:759.86px;width:1.5px;height:24px;background:#1e1e1e;"></div><div class="a" style="left:50.5px;top:759.86px;width:1.5px;height:24px;background:#1e1e1e;"></div><div class="a" style="left:259px;top:759.86px;width:1.5px;height:24px;background:#1e1e1e;"></div><svg class="a" style="left:3px;top:766.36px;" width="17" height="11" viewBox="0 0 17 11" fill="#c0c0c0" stroke="#c0c0c0"><use href="#eye"/></svg><svg class="a" style="left:30px;top:763.86px;" width="17" height="16" viewBox="0 0 17 16" fill="#c4c4c4" stroke="#c4c4c4"><use href="#crown"/></svg><svg class="a" style="left:118px;top:766.86px;" width="6" height="10" viewBox="0 0 6 10" fill="#c0c0c0" stroke="#c0c0c0"><use href="#chevr"/></svg><div class="t" style="left:136px;top:764.98px;font-size:14.68px;color:#a8a8a8;transform:scaleX(0.938);transform-origin:0 0;">hair Image</div></div><div class="a" style="left:739px;top:173px;width:10px;height:338px;background:#2e2e2e;border-radius:5px"></div><div class="a" style="left:749px;top:87px;width:5px;height:884px;background:#141414;"></div><div class="a" style="left:754px;top:87px;width:738px;height:845px;background:conic-gradient(#666 0 25%,#9c9c9c 0 50%,#666 0 75%,#9c9c9c 0);background-size:16px 16px;background-position:2px -2px"></div><svg class="a" style="left:764px;top:947.5px" width="7" height="10" viewBox="0 0 7 10"><path d="M1 1 L5.5 5 L1 9" fill="none" stroke="#b0b0b0" stroke-width="1.6"/></svg><svg class="a" style="left:780px;top:943px" width="19" height="18" viewBox="0 0 19 18"><path d="M9.5 0.5 L19 18 H0 Z" fill="#b4b4b4"/><path d="M9.5 5.5V12" stroke="#232323" stroke-width="2"/><circle cx="9.5" cy="14.8" r="1.2" fill="#232323"/></svg><div class="a" style="left:809px;top:940px;width:1px;height:24px;background:#3a3a3a;"></div><svg class="a" style="left:0;top:0" width="1901" height="971"><path d="M830.6 943.5 L841.3 946.8 L842.4 956 L832.3 962.2 L822.9 953.2 Z M835.4 953.2 L830.6 943.5 M835.4 953.2 L841.3 946.8 M835.4 953.2 L842.4 956 M835.4 953.2 L832.3 962.2 M835.4 953.2 L822.9 953.2" fill="none" stroke="#c0c0c0" stroke-width="1.2" stroke-linejoin="round"/><path d="M860.7 943.3 L871 946.4 L872.1 955.6 L862.5 961.9 L852.9 953 Z" fill="none" stroke="#3a8ad8" stroke-width="1.5" stroke-linejoin="round"/></svg><svg class="a" style="left:0;top:0" width="1901" height="971"><path d="M993.4 942.9 L1008.9 958.1 L1000.3 959.2 L993.7 963.9 Z" fill="#b8b8b8" stroke="#b8b8b8" stroke-width="0.6" stroke-linejoin="round"/><ellipse cx="1032.3" cy="957.5" rx="5.6" ry="6" fill="#b8b8b8"/><path d="M1029.3 955 L1027.3 946.3 M1032 954 L1031.8 944.4 M1034.8 955 L1036.2 946.3 M1036.8 957 L1040.3 949.6 M1028 959 L1022.7 953.3" stroke="#b8b8b8" stroke-width="2.5" stroke-linecap="round"/><circle cx="1062.6" cy="950.8" r="6.6" fill="none" stroke="#b8b8b8" stroke-width="1.8"/><path d="M1067.5 955.7 L1074 962.6" stroke="#b8b8b8" stroke-width="2.4" stroke-linecap="round"/></svg><div class="a" style="left:1089px;top:940px;width:1px;height:24px;background:#3a3a3a;"></div><svg class="a" style="left:0;top:0" width="1901" height="971"><circle cx="1111.9" cy="953.4" r="8.6" fill="none" stroke="#b8b8b8" stroke-width="1.9"/><circle cx="1111.9" cy="953.4" r="3.9" fill="#b8b8b8"/><path d="M1136.7 961.9 L1153.6 945" stroke="#b8b8b8" stroke-width="1.9" stroke-linecap="round"/><circle cx="1144.9" cy="953.2" r="3.8" fill="#232323" stroke="#b8b8b8" stroke-width="1.7"/><circle cx="1144.9" cy="953.2" r="1.1" fill="#b8b8b8"/><g transform="translate(1175.8 952.8) rotate(45)" fill="#3a8ad8"><rect x="-4.6" y="-10" width="9.2" height="3.6" rx="0.8"/><path d="M-3 -6.6 L3 -6.6 L3.6 -1 L-3.6 -1 Z"/><rect x="-6.3" y="-1.4" width="12.6" height="3.4" rx="1"/><path d="M-1.1 1.8 L1.1 1.8 L0.4 8.6 L-0.4 8.6 Z"/></g><path d="M1210 943.2 L1214.6 948.2 L1205.4 948.2 Z M1220.2 953.2 L1215.2 957.8 L1215.2 948.6 Z M1210 963.4 L1205.4 958.2 L1214.6 958.2 Z M1199.6 953.2 L1204.8 948.6 L1204.8 957.8 Z" fill="#b8b8b8"/><circle cx="1210" cy="953.2" r="6" fill="#232323"/><circle cx="1210" cy="953.2" r="4.6" fill="#b8b8b8"/><circle cx="1236.5" cy="958.4" r="4.3" fill="#b8b8b8"/><path d="M1237 958 Q1248 954 1253.2 944.3" fill="none" stroke="#b8b8b8" stroke-width="2" stroke-linecap="round"/></svg><div class="a" style="left:1371px;top:943px;width:22px;height:19px;border:1px solid #777;background:conic-gradient(#6a6a6a 0 25%,#9a9a9a 0 50%,#6a6a6a 0 75%,#9a9a9a 0);background-size:10px 8px;background-position:0 0"></div><div class="t" style="left:1423.5px;top:945.48px;font-size:14.97px;color:#3f8fe0;transform:scaleX(0.918);transform-origin:0 0;">61%</div><div class="a" style="left:1455px;top:940px;width:24px;height:24px;background:#1c1c1c;border:1px solid #2c2c2c;border-radius:3px"></div><svg class="a" style="left:1462px;top:949px;" width="10" height="6" viewBox="0 0 10 6" fill="#c8c8c8" stroke="#c8c8c8"><use href="#chevd"/></svg><div class="a" style="left:1500px;top:52px;width:401px;height:919px;background:#232323;"></div><div class="t" style="left:1515px;top:61.05px;font-size:15.12px;color:#a8a8a8;transform:scaleX(0.915);transform-origin:0 0;">Properties</div><svg class="a" style="left:1590px;top:65.5px;" width="11" height="11" viewBox="0 0 11 11" fill="#b4b4b4" stroke="#b4b4b4"><use href="#ham"/></svg><svg class="a" style="left:1511.5px;top:99px;" width="15" height="15" viewBox="0 0 15 15" fill="#b8b8b8" stroke="#b8b8b8"><use href="#handle"/></svg><div class="t" style="left:1539px;top:99.01px;font-size:15.99px;color:#f2f2f2;transform:scaleX(0.941);transform-origin:0 0;-webkit-text-stroke:0.45px #f2f2f2;">Front (Handle)</div><div class="a" style="left:1501px;top:122px;width:400px;height:24.5px;background:#3a3a3a;"></div><svg class="a" style="left:1507px;top:131px;" width="10" height="6" viewBox="0 0 10 6" fill="#b8b8b8" stroke="#b8b8b8"><use href="#chevd"/></svg><div class="t" style="left:1526px;top:127.84px;font-size:13.95px;color:#cfcfcf;transform:scaleX(0.917);transform-origin:0 0;">Tags</div><div class="a" style="left:1773px;top:153px;width:67px;height:18px;background:#3a3a3a;border-radius:4px;overflow:hidden"><div class="a" style="left:0;top:0;width:33px;height:18px;background:#4e4e4e"></div><div class="a" style="left:33px;top:0;width:1px;height:18px;background:#232323"></div></div><div class="t" style="left:1785px;top:156.58px;font-size:13.08px;color:#e8e8e8;font-weight:700;transform:scaleX(1.058);transform-origin:0 0;">A</div><svg class="a" style="left:1818px;top:157.5px" width="12" height="9" viewBox="0 0 12 9"><circle cx="2.5" cy="1.5" r="1.3" fill="#ddd"/><circle cx="9.5" cy="1.5" r="1.3" fill="#ddd"/><path d="M0.5 5 Q6 9 11.5 5" fill="none" stroke="#ddd" stroke-width="1.8"/></svg><svg class="a" style="left:0;top:0" width="1901" height="971">
<path d="M1595 246.5 H1810" stroke="#3a3a3a" stroke-width="2.5" stroke-dasharray="6 6"/>
<path d="M1581.5 235.5 Q1583 228 1598.5 228 Q1614 228 1615.5 235.5 Z" fill="#6a6a6a"/>
<path d="M1581.5 255.5 Q1583 263 1598.5 263 Q1614 263 1615.5 255.5 Z" fill="#6a6a6a"/>
<path d="M1790.5 235.5 Q1792 228 1807.5 228 Q1823 228 1824.5 235.5 Z" fill="#6a6a6a"/>
<path d="M1790.5 255.5 Q1792 263 1807.5 263 Q1823 263 1824.5 255.5 Z" fill="#6a6a6a"/>
<ellipse cx="1702.3" cy="259.8" rx="68.3" ry="74.3" fill="#232323" stroke="#1a8fc6" stroke-width="3.6"/>
<circle cx="1669.8" cy="245.9" r="19" fill="none" stroke="#6a6a6a" stroke-width="3.6"/>
<circle cx="1733.7" cy="245.9" r="19" fill="none" stroke="#6a6a6a" stroke-width="3.6"/>
<circle cx="1669.8" cy="245.9" r="7.8" fill="#6a6a6a"/>
<circle cx="1733.7" cy="245.9" r="7.8" fill="#6a6a6a"/>
<path d="M1701.3 242.5 L1711.5 278.3 H1692.6 Z" fill="#6a6a6a"/>
<path d="M1677 289.5 Q1702 306 1727.5 289.5" fill="none" stroke="#6a6a6a" stroke-width="5.5" stroke-linecap="round"/>
<path d="M1668 313.4 Q1702 317 1736.4 313.4 Q1718 326 1702 325 Q1686 326 1668 313.4 Z" fill="#6a6a6a"/>
<path d="M1654 221.4 Q1664 208 1680 207.5 Q1688 208 1690.8 212.5 Q1672 213 1654 221.4 Z" fill="#6a6a6a"/>
<path d="M1750.6 221.4 Q1740.6 208 1724.6 207.5 Q1716.6 208 1713.8 212.5 Q1732.6 213 1750.6 221.4 Z" fill="#6a6a6a"/>
</svg><svg class="a" style="left:0;top:0" width="1901" height="971"><path d="M1702.4 354.5 L1702.4 477.1" stroke="#2c2c2c" stroke-width="7"/><path d="M1668.1 384.8 L1734.1 384.8" stroke="#2c2c2c" stroke-width="7"/><path d="M1668.1 384.8 L1632.1 432" stroke="#2c2c2c" stroke-width="7"/><path d="M1632.1 432 L1626.7 489.7" stroke="#2c2c2c" stroke-width="7"/><path d="M1734.1 384.8 L1771.6 432" stroke="#2c2c2c" stroke-width="7"/><path d="M1771.6 432 L1775.6 489.7" stroke="#2c2c2c" stroke-width="7"/><path d="M1671.8 507.7 L1733.8 507.7" stroke="#2c2c2c" stroke-width="7"/><path d="M1671.8 507.7 L1659.9 572.6" stroke="#2c2c2c" stroke-width="7"/><path d="M1659.9 572.6 L1663.8 615.9" stroke="#2c2c2c" stroke-width="7"/><path d="M1663.8 615.9 L1665.6 643.6" stroke="#2c2c2c" stroke-width="7"/><path d="M1665.6 643.6 L1626 643.6" stroke="#2c2c2c" stroke-width="7"/><path d="M1733.8 507.7 L1746.4 572.6" stroke="#2c2c2c" stroke-width="7"/><path d="M1746.4 572.6 L1742 615.9" stroke="#2c2c2c" stroke-width="7"/><path d="M1742 615.9 L1739.2 643.6" stroke="#2c2c2c" stroke-width="7"/><path d="M1739.2 643.6 L1777.4 643.6" stroke="#2c2c2c" stroke-width="7"/><path d="M1702.4 477 V507.7" stroke="#2c2c2c" stroke-width="7"/><circle cx="1702.4" cy="354.5" r="10.6" fill="#6a6a6a"/><circle cx="1668.1" cy="384.8" r="10.6" fill="#6a6a6a"/><circle cx="1734.1" cy="384.8" r="10.6" fill="#6a6a6a"/><circle cx="1632.1" cy="432" r="10.6" fill="#6a6a6a"/><circle cx="1771.6" cy="432" r="10.6" fill="#6a6a6a"/><circle cx="1626.7" cy="489.7" r="10.6" fill="#6a6a6a"/><circle cx="1775.6" cy="489.7" r="10.6" fill="#6a6a6a"/><circle cx="1702.4" cy="477.1" r="10.6" fill="#6a6a6a"/><circle cx="1671.8" cy="507.7" r="10.6" fill="#6a6a6a"/><circle cx="1733.8" cy="507.7" r="10.6" fill="#6a6a6a"/><circle cx="1659.9" cy="572.6" r="10.6" fill="#6a6a6a"/><circle cx="1746.4" cy="572.6" r="10.6" fill="#6a6a6a"/><circle cx="1663.8" cy="615.9" r="10.6" fill="#6a6a6a"/><circle cx="1742" cy="615.9" r="10.6" fill="#6a6a6a"/><circle cx="1665.6" cy="643.6" r="10.6" fill="#6a6a6a"/><circle cx="1739.2" cy="643.6" r="10.6" fill="#6a6a6a"/><circle cx="1626" cy="643.6" r="10.6" fill="#6a6a6a"/><circle cx="1777.4" cy="643.6" r="10.6" fill="#6a6a6a"/></svg><div class="a" style="left:1546px;top:705.0px;width:292px;height:1px;background:#363636;"></div><div class="t" style="left:1549px;top:714.10px;font-size:14.24px;color:#a6a6a6;transform:scaleX(0.897);transform-origin:0 0;">Physics</div><div class="a" style="left:1548.5px;top:740.5px;width:51.3px;height:22px;background:#3a3a3a;border-radius:5px"></div><div class="t" style="left:1552.8px;top:745.30px;font-size:14.24px;color:#a4a4a4;transform:scaleX(0.947);transform-origin:0 0;">Dangle</div><div class="a" style="left:1606.4px;top:740.5px;width:55.4px;height:22px;background:#3a3a3a;border-radius:5px"></div><div class="t" style="left:1610.7px;top:745.30px;font-size:14.24px;color:#a4a4a4;transform:scaleX(0.986);transform-origin:0 0;">Magnet</div><div class="a" style="left:1546px;top:791.0px;width:292px;height:1px;background:#363636;"></div><div class="t" style="left:1549px;top:800.10px;font-size:14.24px;color:#a6a6a6;transform:scaleX(0.987);transform-origin:0 0;">Modifiers</div><div class="a" style="left:1548.5px;top:826.5px;width:71px;height:22px;background:#3a3a3a;border-radius:5px"></div><div class="t" style="left:1552.8px;top:831.30px;font-size:14.24px;color:#a4a4a4;transform:scaleX(0.950);transform-origin:0 0;">Draggable</div><div class="a" style="left:1626px;top:826.5px;width:41px;height:22px;background:#3a3a3a;border-radius:5px"></div><div class="t" style="left:1630.3px;top:831.30px;font-size:14.24px;color:#a4a4a4;transform:scaleX(0.931);transform-origin:0 0;">Fixed</div><div class="a" style="left:1673.5px;top:826.5px;width:88.5px;height:22px;background:#3a3a3a;border-radius:5px"></div><div class="t" style="left:1677.8px;top:831.30px;font-size:14.24px;color:#a4a4a4;transform:scaleX(0.990);transform-origin:0 0;">Motion Lines</div><div class="a" style="left:1546px;top:877.3px;width:292px;height:1px;background:#363636;"></div><div class="t" style="left:1549px;top:886.40px;font-size:14.24px;color:#a6a6a6;transform:scaleX(0.959);transform-origin:0 0;">Miscellaneous</div><div class="a" style="left:1548.5px;top:912.8px;width:56.3px;height:22px;background:#3a3a3a;border-radius:5px"></div><div class="t" style="left:1552.8px;top:917.60px;font-size:14.24px;color:#a4a4a4;transform:scaleX(0.957);transform-origin:0 0;">Breathe</div><div class="a" style="left:1611.2px;top:912.8px;width:70.4px;height:22px;background:#3a3a3a;border-radius:5px"></div><div class="t" style="left:1615.5px;top:917.60px;font-size:14.24px;color:#a4a4a4;transform:scaleX(0.961);transform-origin:0 0;">Transform</div><svg class="a" style="left:0;top:0" width="1901" height="971">
<defs><pattern id="ck" patternUnits="userSpaceOnUse" x="4" y="5" width="16" height="16"><rect width="16" height="16" fill="#666"/><rect width="8" height="8" fill="#9c9c9c"/><rect x="8" y="8" width="8" height="8" fill="#9c9c9c"/></pattern><clipPath id="cv"><rect x="754" y="87" width="738" height="845"/></clipPath></defs>
<g clip-path="url(#cv)">
<!-- back hair (right behind) -->
<path d="M1168 205 L1183.5 205 L1183 236 Q1182 258 1169 274 L1150 279 L1134 268 L1154 246.5 L1163 226 Z" fill="#0d0d0d"/>
<path d="M1067 205 L1080 205 L1084 236 L1066 236 Z" fill="#0d0d0d"/>
<!-- coat -->
<path d="M1050 290 Q1037 296 1033 320 Q1028 360 1027 420 L1022.4 440 L1022.4 512.6 L1050.5 512.6 L1050 641 L1112.4 641.5 L1110.6 487 L1106 435 L1096 380 L1095 360 L1099 298 L1101.5 275 Z" fill="#f4f4f4"/>
<path d="M1152 276 L1206.5 290 Q1219 305 1222 330 Q1226 370 1229 425 L1231.4 440 L1231.4 511 L1201.5 511 L1202 640 L1139.2 640.5 L1142.3 487 L1146 435 L1156 380 L1157 360 L1155 301 Z" fill="#f4f4f4"/>
<path d="M1061.5 396 L1063.5 396 L1057.4 440 L1052 512.6 L1050 512.6 L1047 512.6 L1056.4 440 Z" fill="url(#ck)"/>
<path d="M1187 396 L1189.5 396 L1196.6 440 L1208.2 509.5 L1208.2 511 L1201.2 511 L1200.5 509.5 L1191.2 440 Z" fill="url(#ck)"/>
<!-- scrubs -->
<path d="M1099 296 L1155 298 L1157 360 L1156 380 L1146 435 L1142.3 488 L1110.6 488 L1106 435 L1096 380 L1095 360 Z" fill="#a2bbdf"/>
<path d="M1098 300 L1127 336 L1156 302 L1150 300 L1125 318 L1104 298 Z" fill="#8aabd6"/>
<!-- neck -->
<path d="M1102 262 L1150 262 L1153 292 L1125.4 314.4 L1099 290 Z" fill="#f5aa80"/>
<!-- pants -->
<path d="M1109.8 487.5 L1142 487.5 L1145 641 L1176.7 644 L1175.7 700 Q1173 770 1171 816 L1141.3 816 Q1136 760 1131.9 700 L1126 575 L1124 575 L1116.5 700 Q1111 760 1107 816 L1078.6 814 Q1074 760 1072.6 700 L1072.3 644 L1108 641 Z" fill="#7aa0cf"/>
<!-- hands -->
<path d="M1023 520 Q1026 508 1037 507.5 Q1046 508 1049 516 L1051 545 L1051 578 Q1046 582 1040 581 Q1026 576 1022 555 Q1020 535 1023 520 Z" fill="#f9a877"/>
<path d="M1043.5 558 Q1042.5 547 1046 540.5 L1049 541 L1049 557 Z" fill="url(#ck)"/>
<path d="M1230 520 Q1227 508 1216 507.5 Q1207 508 1204 516 L1201.5 545 L1201.5 578 Q1207 582 1213 581 Q1227 576 1231 555 Q1233 535 1230 520 Z" fill="#f9a877"/>
<path d="M1209.5 560 Q1210.5 547 1207 540.5 L1203.5 541 L1203.5 558 Z" fill="url(#ck)"/>
<!-- ankles + shoes -->
<path d="M1081 815 L1107 815 L1108 875 L1114 890 L1085 890 L1081 860 Z" fill="#f9aa78"/>
<path d="M1141 815 L1168.6 815 L1168 870 L1169 890 L1141 890 L1139 860 Z" fill="#f9aa78"/>
<path d="M1082 870 Q1086 888 1104 889 Q1110 888 1114 876 Q1113 865 1109 854 Q1118 880 1117.5 903 Q1112 915 1099 919 Q1085 915 1078 905 Q1076 890 1082 870 Z" fill="#0c0c0c"/>
<path d="M1167 870 Q1163 888 1145 889 Q1139 888 1136 876 Q1137 865 1140 854 Q1131 880 1132 903 Q1137 915 1150 919 Q1164 915 1171.5 905 Q1174 890 1167 870 Z" fill="#0c0c0c"/>
<!-- ears -->
<ellipse cx="1073.5" cy="216.5" rx="9.5" ry="19" fill="#fbcdae"/>
<ellipse cx="1074.5" cy="217" rx="5" ry="12" fill="#f5b48f"/>
<ellipse cx="1175" cy="216.5" rx="9" ry="19" fill="#fbcdae"/>
<ellipse cx="1174" cy="217" rx="5" ry="12" fill="#f5b48f"/>
<!-- face -->
<path d="M1074.5 185 L1075 190 Q1077 212 1083 231.5 Q1092 252 1108.8 267.5 Q1117 273 1124.3 273.2 Q1132 273 1139.7 267.5 Q1155 250 1167.5 226.3 Q1172 210 1174.7 190 L1175 185 Z" fill="#fbcdae"/>
<!-- front hair dome + bangs -->
<path d="M1120 104.8 Q1098 106 1079 120.7 Q1068 135 1067 162 Q1067 178 1069.7 188 L1073 198 L1075 183.6 L1175 183.6 L1177 198 L1185.5 200 Q1186 175 1181 156.8 Q1176 134 1163 118.7 Q1148 106 1120 104.8 Z" fill="#121212"/>
<g fill="#fbcdae">
<path d="M1080 155 Q1079 170 1081.8 183.8 L1075 183.8 Q1078 170 1080 155 Z"/>
<path d="M1101 153.5 Q1104 170 1109 183.8 L1102.5 183.8 Q1102 170 1101 153.5 Z"/>
<path d="M1133 166 L1135 183.8 L1130.5 183.8 Z"/>
<path d="M1155.2 156.8 Q1157 172 1159.3 183.8 L1153 183.8 Q1155 170 1155.2 156.8 Z"/>
<path d="M1170.6 156.8 Q1174 170 1176.8 183.8 L1171.6 183.8 Q1171.5 170 1170.6 156.8 Z"/>
</g>
<!-- brows -->
<path d="M1082 188.8 Q1095 185.5 1108.8 189 Q1095 188 1082 190.5 Z" fill="#1a1a1a" stroke="#1a1a1a" stroke-width="1.6"/>
<path d="M1166.5 188.8 Q1153 185.5 1139.7 189 Q1153 188 1166.5 190.5 Z" fill="#1a1a1a" stroke="#1a1a1a" stroke-width="1.6"/>
<!-- eyes -->
<path d="M1080 213.5 Q1083 199 1095 198.5 Q1106 199 1108 212 Q1094 216.5 1080 213.5 Z" fill="#f2f2f2"/>
<circle cx="1095.4" cy="206.8" r="7" fill="#66b83c"/><circle cx="1095.8" cy="207.4" r="3.2" fill="#111"/>
<path d="M1078.5 213.5 Q1083 198.2 1095 197.8 Q1106 198.2 1108.8 211.5" fill="none" stroke="#1a1a1a" stroke-width="1.9"/>
<path d="M1140 212 Q1142 199 1152.5 198.5 Q1165 199 1168 213.5 Q1154 216.5 1140 212 Z" fill="#f2f2f2"/>
<circle cx="1152.2" cy="206.8" r="7" fill="#66b83c"/><circle cx="1152.6" cy="207.4" r="3.2" fill="#111"/>
<path d="M1139.2 211.5 Q1142 198.2 1152.5 197.8 Q1165 198.2 1169.5 213.5" fill="none" stroke="#1a1a1a" stroke-width="1.9"/>
<path d="M1121.5 219.5 Q1119 223 1121 226.5" fill="none" stroke="#e9a88a" stroke-width="0.9"/>
<!-- mouth -->
<path d="M1111 250.5 Q1117 248 1123 249.5 Q1129 248 1135.6 250.5 Q1129 256 1123 256 Q1117 256 1111 250.5 Z" fill="#e8503a"/>
<!-- left stetho loop -->
<path d="M1050 321.5 Q1034 360 1031 377 Q1031 393 1050 397 L1081 402 Q1090 396 1090.5 386 L1090.5 325" fill="none" stroke="#bdbdbd" stroke-width="1.8"/>
<path d="M1090.3 325 V339" stroke="#444" stroke-width="2.5"/>
<!-- left hair front over coat -->
<path d="M1068 231 L1083.3 235.5 Q1095 250 1104.3 263.2 L1098 279 L1087 306.4 L1082 317.5 L1064.7 319 Q1055 310 1055.5 286 Q1057 262 1062 248 Z" fill="#0b0b0b"/>
<path d="M1054 305 C1050.5 330 1058 350 1077 365 Q1090 374 1105.5 378.2 Q1092 370 1081.7 360.2 C1070 348 1062 335 1061 318 Z" fill="#0b0b0b"/>
<path d="M1061 315 C1061 335 1068 345 1081.7 352.8 Q1092 357.5 1101.5 358 Q1092 352 1086.3 346.3 C1080 338 1076 328 1073.5 318 Z" fill="#0b0b0b"/>
<path d="M1078 314 Q1096 316 1110.6 320 Q1100 326.5 1090 325.8 Q1082 324.5 1077 320 Z" fill="#0b0b0b"/>
<!-- stethoscope -->
<path d="M1159 274 Q1172 282 1173 300 L1176.8 375" fill="none" stroke="#333" stroke-width="3.2"/>
<circle cx="1179.4" cy="389.9" r="13.5" fill="#d9d9d9" stroke="#3a3a3a" stroke-width="3"/>
<path d="M1170 384 L1182 400 M1176 380 L1188 396" stroke="#f4f4f4" stroke-width="2.5"/>
<path d="M1047.5 398 Q1052 395 1058 399 Q1064 396 1069 400 Q1064 404 1058 402 Q1052 404 1047.5 401 Z" fill="#111" stroke="#111" stroke-width="2"/>
<!-- coat seams -->
<path d="M1069 363.5 L1093.8 388" stroke="#c8c8c8" stroke-width="2.4"/>
<path d="M1125.5 489 V560" stroke="#8fb0d9" stroke-width="0.8"/>
<!-- overlays: yellow mesh outline -->
<path d="M1098.5 105.3 L1120 102.2 L1150 104.8 L1171.6 122.8 L1183 153.7 L1187 195 L1186 221.2 L1177.8 252 L1166.5 265.5 L1154.1 275.7 L1153.4 293 L1124.5 316.5 L1096.5 289.7 L1079.2 318.5 L1066.9 319.3 L1057.8 309.4 L1053.7 281.4 L1056.3 262.4 L1067.6 230.4 L1061.5 216 L1063 197 L1069.7 193.4 L1065.6 182.5 L1064 167 L1067.6 138.2 L1081 115.6 Z" fill="none" stroke="#f2f01e" stroke-width="2"/>
<rect x="1051.5" y="103" width="134" height="275.5" fill="none" stroke="#4aa8e0" stroke-width="1.6"/>
<g fill="#22c322">
<circle cx="1097" cy="188.7" r="4"/><circle cx="1151.6" cy="188.2" r="4"/>
<circle cx="1093.9" cy="203.5" r="4"/><circle cx="1153.6" cy="204.5" r="4"/>
<circle cx="1123.8" cy="253.6" r="4"/><circle cx="1087.1" cy="285.9" r="3.8"/><circle cx="1080.5" cy="312.7" r="3.8"/>
</g>
<!-- handle -->
<circle cx="1123.1" cy="302.2" r="9.3" fill="#ececec" stroke="#4a3b33" stroke-width="1.1"/>
<circle cx="1123.1" cy="302.2" r="7.4" fill="none" stroke="#555" stroke-width="1.8" stroke-dasharray="0.9 1.1"/>
<circle cx="1123.1" cy="302.2" r="4.9" fill="#fff" stroke="#222" stroke-width="1.9"/>
<!-- tags -->
<rect x="1138.6" y="291.3" width="59.3" height="22.3" rx="4" fill="#a99d20"/>
<rect x="1200.4" y="291.3" width="23.9" height="22.3" rx="4" fill="#a99d20"/>
<path d="M1182 298 L1190.8 306.4 M1190.8 298 L1182 306.4" stroke="#d6cd7c" stroke-width="1.8"/>
<path d="M1212.7 297 V308.4 M1207 302.7 H1218.5" stroke="#d9d17e" stroke-width="1.5"/>
<rect x="1108" y="382" width="24.8" height="23.2" rx="4" fill="#1f74ad"/>
<path d="M1120.4 387.5 V399.5 M1114.4 393.5 H1126.4" stroke="#9fd0f0" stroke-width="2.2"/>
</g>
</svg><div class="t" style="left:1144.8px;top:294.95px;font-size:14.53px;color:#f3efba;transform:scaleX(0.893);transform-origin:0 0;-webkit-text-stroke:0.3px #f3efba;">Head</div><div class="t" style="left:1112.2px;top:315.91px;font-size:11.63px;color:#e8e43a;font-weight:700;transform:scaleX(0.798);transform-origin:0 0;text-shadow:0.6px 0.8px 0.6px #111,0 0 1px #222;">Front</div>
</body></html>
